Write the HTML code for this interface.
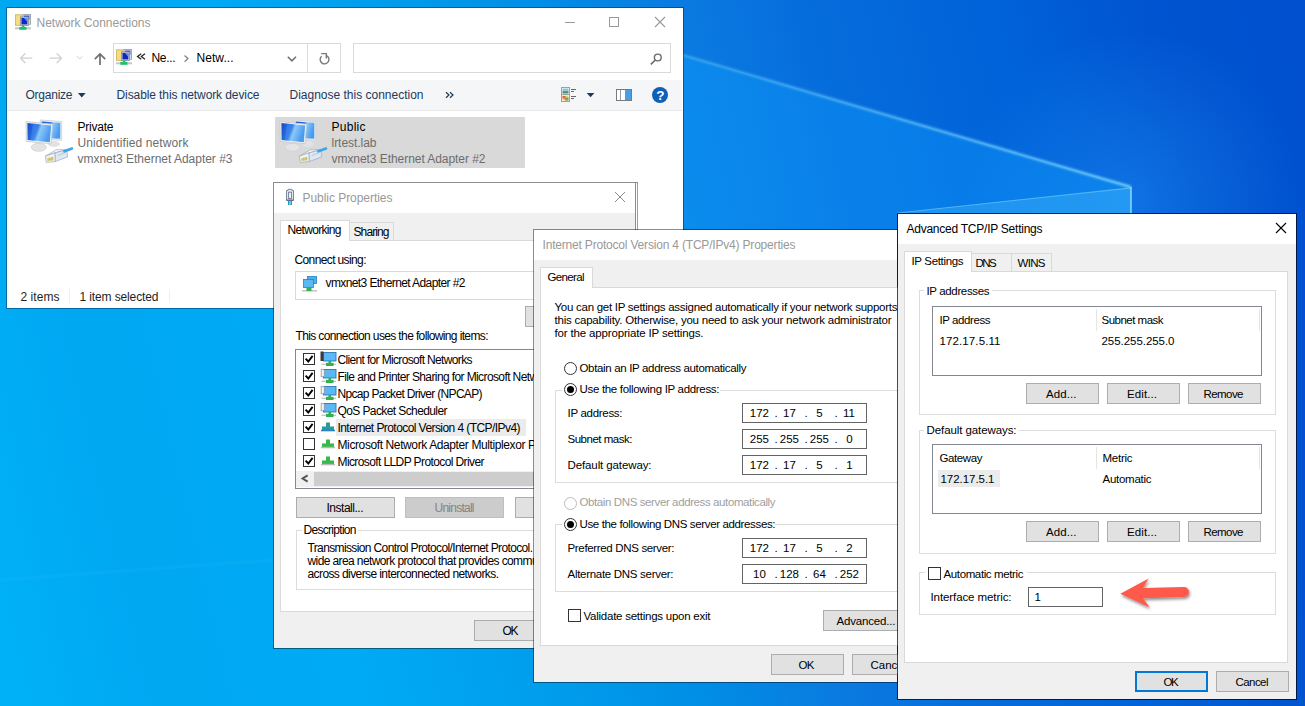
<!DOCTYPE html><html><head><meta charset="utf-8"><style>
html,body{margin:0;padding:0;width:1305px;height:706px;overflow:hidden;}
body{position:relative;font-family:"Liberation Sans", sans-serif;}
body div, body span.t, body svg.a{position:absolute;}
span.t{white-space:nowrap;}
</style></head><body>
<div style="left:0;top:0;width:1305px;height:706px;background:linear-gradient(77deg,#00b2f8 0%,#00a8f2 11%,#00aaf5 25%,#009eec 37%,#008ee6 48%,#0a7ae0 57.6%,#066ddc 66%,#0062d9 79%,#0054d0 89%,#0050cf 100%);"></div>
<svg class="a" style="left:0;top:0" width="1305" height="706" viewBox="0 0 1305 706">
<defs><filter id="gl" x="-5%" y="-50%" width="110%" height="200%"><feGaussianBlur stdDeviation="1.3"/></filter>
<linearGradient id="lg" x1="683" y1="0" x2="1131" y2="0" gradientUnits="userSpaceOnUse"><stop offset="0" stop-color="#7fd8ff" stop-opacity="0.35"/><stop offset="1" stop-color="#8fe8ff" stop-opacity="0.75"/></linearGradient>
<radialGradient id="rg" cx="1131" cy="200" r="170" gradientUnits="userSpaceOnUse"><stop offset="0" stop-color="#2aa0ff" stop-opacity="0.35"/><stop offset="1" stop-color="#2aa0ff" stop-opacity="0"/></radialGradient></defs>
<rect x="900" y="30" width="405" height="200" fill="url(#rg)"/>
<polygon points="683,55 1131,187 1131,213 683,260" fill="#10a0ff" fill-opacity="0.38"/>
<polygon points="897,213 1131,187 1131,213" fill="#50c8ff" fill-opacity="0.32"/>
<polyline points="683,55 1131,187" fill="none" stroke="url(#lg)" stroke-width="2.5" filter="url(#gl)"/>
<polyline points="683,55 1131,187" fill="none" stroke="url(#lg)" stroke-width="1" stroke-opacity="0.25"/>
<line x1="1131" y1="187" x2="1131" y2="214" stroke="#9aeaff" stroke-opacity="0.85" stroke-width="1.5"/>
<line x1="897" y1="213" x2="1131" y2="188" stroke="#8fdcff" stroke-opacity="0.45" stroke-width="1"/>
<line x1="0" y1="580" x2="273" y2="560" stroke="#9fe6ff" stroke-opacity="0.07" stroke-width="2" filter="url(#gl)"/>
</svg>
<div style="left:7px;top:8px;width:676px;height:300px;background:#ffffff;"></div>
<div style="left:6px;top:7px;width:678px;height:1px;background:rgba(0,20,50,0.42);"></div>
<div style="left:6px;top:308px;width:678px;height:1px;background:rgba(0,20,50,0.42);"></div>
<div style="left:6px;top:8px;width:1px;height:300px;background:rgba(0,20,50,0.42);"></div>
<div style="left:683px;top:8px;width:1px;height:300px;background:rgba(0,20,50,0.42);"></div>
<span class="t" style="left:36.50px;top:16.84px;font-size:12px;line-height:12px;color:#999999;letter-spacing:-0.003px;">Network Connections</span>
<div style="left:565px;top:22px;width:10px;height:1px;background:#999"></div>
<div style="left:609px;top:17px;width:10px;height:10px;border:1px solid #999;box-sizing:border-box"></div>
<svg class="a" style="left:654px;top:16px" width="12" height="12"><path d="M1 1L11 11M11 1L1 11" stroke="#999" stroke-width="1.1"/></svg>
<div style="left:113px;top:43px;width:228px;height:30px;background:#fff;border:1px solid #d9d9d9;box-sizing:border-box;"></div>
<div style="left:307px;top:44px;width:1px;height:28px;background:#d9d9d9;"></div>
<div style="left:353px;top:43px;width:318px;height:30px;background:#fff;border:1px solid #d9d9d9;box-sizing:border-box;"></div>
<span class="t" style="left:151.50px;top:51.84px;font-size:12px;line-height:12px;color:#000;letter-spacing:-0.336px;">Ne...</span>
<span class="t" style="left:196.50px;top:51.84px;font-size:12px;line-height:12px;color:#000;letter-spacing:0.052px;">Netw...</span>
<div style="left:7px;top:80px;width:675px;height:30px;background:#f5f6f7;"></div>
<div style="left:7px;top:110px;width:675px;height:1px;background:#e8e8e8;"></div>
<span class="t" style="left:25.50px;top:88.84px;font-size:12px;line-height:12px;color:#1e395b;letter-spacing:-0.243px;">Organize</span>
<span class="t" style="left:116.50px;top:88.84px;font-size:12px;line-height:12px;color:#1e395b;letter-spacing:-0.093px;">Disable this network device</span>
<span class="t" style="left:289.50px;top:88.84px;font-size:12px;line-height:12px;color:#1e395b;letter-spacing:-0.004px;">Diagnose this connection</span>
<div style="left:275px;top:117px;width:250px;height:51px;background:#d9d9d9;"></div>
<span class="t" style="left:77.50px;top:120.84px;font-size:12px;line-height:12px;color:#000;letter-spacing:-0.227px;">Private</span>
<span class="t" style="left:77.50px;top:136.84px;font-size:12px;line-height:12px;color:#6d6d6d;letter-spacing:0.119px;">Unidentified network</span>
<span class="t" style="left:77.50px;top:152.84px;font-size:12px;line-height:12px;color:#6d6d6d;letter-spacing:-0.017px;">vmxnet3 Ethernet Adapter #3</span>
<span class="t" style="left:331.50px;top:120.84px;font-size:12px;line-height:12px;color:#000;letter-spacing:0.263px;">Public</span>
<span class="t" style="left:331.50px;top:136.84px;font-size:12px;line-height:12px;color:#6d6d6d;letter-spacing:-0.040px;">lrtest.lab</span>
<span class="t" style="left:331.50px;top:152.84px;font-size:12px;line-height:12px;color:#6d6d6d;letter-spacing:-0.055px;">vmxnet3 Ethernet Adapter #2</span>
<span class="t" style="left:20.50px;top:290.84px;font-size:12px;line-height:12px;color:#1e1e1e;letter-spacing:0.052px;">2 items</span>
<span class="t" style="left:79.50px;top:290.84px;font-size:12px;line-height:12px;color:#1e1e1e;letter-spacing:-0.123px;">1 item selected</span>
<div style="left:69px;top:289px;width:1px;height:14px;background:#f0f0f0;"></div>
<div style="left:169px;top:289px;width:1px;height:14px;background:#f0f0f0;"></div>
<svg class="a" style="left:15px;top:14px" width="16" height="16" viewBox="0 0 16 16"><g>
<rect x="0.5" y="0.8" width="6" height="10.5" fill="#f2dc84" stroke="#d0b050" stroke-width="0.8"/>
<rect x="7.8" y="0.5" width="7.7" height="9.8" fill="#d4dae2" stroke="#9aa0a8" stroke-width="0.9"/>
<rect x="9" y="1.6" width="5.4" height="4" fill="#3050d8"/>
<rect x="5.4" y="3" width="8" height="8.4" fill="#c8ccd2" stroke="#8a9098" stroke-width="0.8"/>
<rect x="6.5" y="4" width="5.8" height="6.4" fill="#1028c0"/>
<path d="M9 4H12.3V8Z" fill="#6a90f0"/>
<rect x="0" y="13.3" width="16" height="2" fill="#c4c8cc"/>
<rect x="6.8" y="11.4" width="2.6" height="2.2" fill="#20c070"/>
<rect x="4.3" y="13" width="7.2" height="2.8" fill="#20c070"/>
</g></svg>
<svg class="a" style="left:116px;top:49px" width="16" height="16" viewBox="0 0 16 16"><g>
<rect x="0.5" y="0.8" width="6" height="10.5" fill="#f2dc84" stroke="#d0b050" stroke-width="0.8"/>
<rect x="7.8" y="0.5" width="7.7" height="9.8" fill="#d4dae2" stroke="#9aa0a8" stroke-width="0.9"/>
<rect x="9" y="1.6" width="5.4" height="4" fill="#3050d8"/>
<rect x="5.4" y="3" width="8" height="8.4" fill="#c8ccd2" stroke="#8a9098" stroke-width="0.8"/>
<rect x="6.5" y="4" width="5.8" height="6.4" fill="#1028c0"/>
<path d="M9 4H12.3V8Z" fill="#6a90f0"/>
<rect x="0" y="13.3" width="16" height="2" fill="#c4c8cc"/>
<rect x="6.8" y="11.4" width="2.6" height="2.2" fill="#20c070"/>
<rect x="4.3" y="13" width="7.2" height="2.8" fill="#20c070"/>
</g></svg>
<svg class="a" style="left:18px;top:50px" width="100" height="18" viewBox="18 50 100 18">
<path d="M20.5 58.2H32.3M20.5 58.2L25.3 53.4M20.5 58.2L25.3 63" stroke="#cfcfcf" stroke-width="1.3" fill="none"/>
<path d="M61.5 58.2H49.7M61.5 58.2L56.7 53.4M61.5 58.2L56.7 63" stroke="#cfcfcf" stroke-width="1.3" fill="none"/>
<path d="M76.8 56L79.7 58.9L82.6 56" stroke="#cfcfcf" stroke-width="1" fill="none"/>
<path d="M100 65V54M94.8 59.2L100 54L105.2 59.2" stroke="#707070" stroke-width="1.7" fill="none"/>
</svg>
<svg class="a" style="left:134px;top:50px" width="60" height="16" viewBox="134 50 60 16">
<path d="M141.2 53.8L137.5 56.5L141.2 59.2M145 53.8L141.3 56.5L145 59.2" stroke="#222" stroke-width="1.2" fill="none"/>
<path d="M184.6 55.5L187.9 58.6L184.6 61.7" stroke="#808080" stroke-width="1.3" fill="none"/>
</svg>
<svg class="a" style="left:284px;top:50px" width="50" height="18" viewBox="284 50 50 18">
<path d="M287.8 56.8L291.9 60.9L296 56.8" stroke="#707070" stroke-width="1.5" fill="none"/>
<path d="M321.6 56.2A4.4 4.4 0 1 0 326.2 55.4" stroke="#7a7a7a" stroke-width="1.4" fill="none"/>
<path d="M321.2 53.6H326.3V58.5" stroke="#7a7a7a" stroke-width="1.4" fill="none"/>
</svg>
<svg class="a" style="left:646px;top:50px" width="20" height="18" viewBox="646 50 20 18">
<circle cx="657.8" cy="57.5" r="3.4" stroke="#6a6a6a" stroke-width="1.4" fill="none"/>
<path d="M655.3 60L650.8 64.3" stroke="#6a6a6a" stroke-width="1.6"/>
</svg>
<svg class="a" style="left:70px;top:85px" width="600" height="20" viewBox="70 85 600 20">
<path d="M78 93H85.6L81.8 97.6Z" fill="#1e395b"/>
<path d="M446 92.2L449 95L446 97.8M450 92.2L453 95L450 97.8" stroke="#1e395b" stroke-width="1.2" fill="none"/>
<rect x="561.5" y="87.5" width="8" height="7" fill="#fff" stroke="#a0a0a0"/>
<rect x="561.5" y="94.5" width="8" height="7" fill="#fff" stroke="#a0a0a0"/>
<rect x="562.5" y="88.5" width="6" height="3" fill="#8cc4ec"/><rect x="562.5" y="91.2" width="6" height="2.3" fill="#4a9058"/>
<rect x="562.5" y="95.5" width="6" height="5" fill="#f0c890"/><rect x="562.5" y="96" width="3" height="2.5" fill="#e06a3a"/><rect x="565" y="97.5" width="3.5" height="3" fill="#6ab050"/>
<path d="M571 89.5H576M571 91.5H574M571 96.5H576M571 98.5H574" stroke="#666" stroke-width="1"/>
<path d="M586.7 93H594.4L590.55 97.3Z" fill="#1e395b"/>
<rect x="616.5" y="89.5" width="15" height="11" fill="#fff" stroke="#7a7a7a"/>
<rect x="625" y="90" width="6" height="10" fill="#4a9ee6"/>
<path d="M620.5 90V100" stroke="#9a9a9a" stroke-width="1"/>
<circle cx="660" cy="95" r="8" fill="#0d5fb8"/>
<text x="660.3" y="100.3" font-family="Liberation Sans" font-weight="bold" font-size="13.5" fill="#fff" text-anchor="middle">?</text>
</svg>
<svg class="a" style="left:24px;top:117px" width="50" height="50" viewBox="0 0 50 50"><g>
<defs><linearGradient id="scr" x1="0" y1="0" x2="1" y2="0.3"><stop offset="0" stop-color="#1848c8"/><stop offset="0.45" stop-color="#2a78e8"/><stop offset="0.6" stop-color="#8cc8f8"/><stop offset="1" stop-color="#4a9af0"/></linearGradient></defs>
<path d="M16.2 3L37.7 4.5L37.7 23.2L17 22.5Z" fill="#eef0f2" stroke="#cfd3d8" stroke-width="0.9"/>
<path d="M17.6 4.6L36.3 5.8L36.3 21.8L18.2 21.1Z" fill="url(#scr)"/>
<ellipse cx="30" cy="27" rx="6" ry="3" fill="#e2e2e2"/>
<ellipse cx="14.7" cy="30.3" rx="7.5" ry="4" fill="#e4e4e4" stroke="#cfcfcf" stroke-width="0.7"/>
<path d="M2 4.5L28.5 7.3L27 26.8L2.3 24.4Z" fill="#f2f3f4" stroke="#c8ccd0" stroke-width="0.9"/>
<path d="M3.4 6L27.1 8.5L25.8 25.3L3.6 23Z" fill="url(#scr)"/>
<path d="M9 6.6L14 7.1L11.5 23.6L6.6 23.1Z" fill="#5a9af0" opacity="0.35"/>
<path d="M21.4 39.1L32.5 32.7L42.8 32.7L30.9 35.9Z" fill="#f4f8fc" stroke="#9aaabb" stroke-width="0.7"/>
<path d="M30.9 35.9L42.8 32.7L43.6 39.9L31.3 44.6Z" fill="#dde8f2" stroke="#9aaabb" stroke-width="0.7"/>
<path d="M21.4 39.1L30.9 35.9L31.3 44.6L22.2 45.4Z" fill="#eef2f6" stroke="#9aaabb" stroke-width="0.7"/>
<path d="M23 41.5L29.5 39.5L29.7 43.3L23.3 44Z" fill="#e8dc90"/>
<path d="M24.2 41.2V43.8M25.6 40.8V43.6M27 40.4V43.5M28.4 40V43.4" stroke="#a89a30" stroke-width="0.5"/>
<path d="M34 38.5L41.5 35.5" stroke="#b9c8d6" stroke-width="1"/>
<path d="M40.4 34.3L48 31.5" stroke="#3aa4ec" stroke-width="2.6" stroke-linecap="round"/>
</g></svg>
<svg class="a" style="left:278px;top:117px" width="50" height="50" viewBox="0 0 50 50"><g>
<defs><linearGradient id="scr" x1="0" y1="0" x2="1" y2="0.3"><stop offset="0" stop-color="#1848c8"/><stop offset="0.45" stop-color="#2a78e8"/><stop offset="0.6" stop-color="#8cc8f8"/><stop offset="1" stop-color="#4a9af0"/></linearGradient></defs>
<path d="M16.2 3L37.7 4.5L37.7 23.2L17 22.5Z" fill="#eef0f2" stroke="#cfd3d8" stroke-width="0.9"/>
<path d="M17.6 4.6L36.3 5.8L36.3 21.8L18.2 21.1Z" fill="url(#scr)"/>
<ellipse cx="30" cy="27" rx="6" ry="3" fill="#e2e2e2"/>
<ellipse cx="14.7" cy="30.3" rx="7.5" ry="4" fill="#e4e4e4" stroke="#cfcfcf" stroke-width="0.7"/>
<path d="M2 4.5L28.5 7.3L27 26.8L2.3 24.4Z" fill="#f2f3f4" stroke="#c8ccd0" stroke-width="0.9"/>
<path d="M3.4 6L27.1 8.5L25.8 25.3L3.6 23Z" fill="url(#scr)"/>
<path d="M9 6.6L14 7.1L11.5 23.6L6.6 23.1Z" fill="#5a9af0" opacity="0.35"/>
<path d="M21.4 39.1L32.5 32.7L42.8 32.7L30.9 35.9Z" fill="#f4f8fc" stroke="#9aaabb" stroke-width="0.7"/>
<path d="M30.9 35.9L42.8 32.7L43.6 39.9L31.3 44.6Z" fill="#dde8f2" stroke="#9aaabb" stroke-width="0.7"/>
<path d="M21.4 39.1L30.9 35.9L31.3 44.6L22.2 45.4Z" fill="#eef2f6" stroke="#9aaabb" stroke-width="0.7"/>
<path d="M23 41.5L29.5 39.5L29.7 43.3L23.3 44Z" fill="#e8dc90"/>
<path d="M24.2 41.2V43.8M25.6 40.8V43.6M27 40.4V43.5M28.4 40V43.4" stroke="#a89a30" stroke-width="0.5"/>
<path d="M34 38.5L41.5 35.5" stroke="#b9c8d6" stroke-width="1"/>
<path d="M40.4 34.3L48 31.5" stroke="#3aa4ec" stroke-width="2.6" stroke-linecap="round"/>
</g></svg>
<div style="left:274px;top:183px;width:361px;height:465px;background:#f0f0f0;"></div>
<div style="left:274px;top:183px;width:361px;height:30px;background:#ffffff;"></div>
<div style="left:273px;top:182px;width:365px;height:1px;background:rgba(0,0,0,0.45);"></div>
<div style="left:273px;top:648px;width:363px;height:1px;background:rgba(0,0,0,0.45);"></div>
<div style="left:273px;top:183px;width:1px;height:465px;background:rgba(0,0,0,0.45);"></div>
<div style="left:635px;top:183px;width:1px;height:465px;background:rgba(0,0,0,0.45);"></div>
<div style="left:636px;top:183px;width:1px;height:465px;background:rgba(255,255,255,0.7);"></div>
<div style="left:637px;top:183px;width:1px;height:466px;background:rgba(0,0,0,0.38);"></div>
<span class="t" style="left:302.50px;top:191.84px;font-size:12px;line-height:12px;color:#999999;letter-spacing:-0.045px;">Public Properties</span>
<svg class="a" style="left:614px;top:191px" width="12" height="12"><path d="M1 1L11 11M11 1L1 11" stroke="#8a8a8a" stroke-width="1"/></svg>
<div style="left:280px;top:240px;width:355px;height:372px;background:#ffffff;border:1px solid #d9d9d9;box-sizing:border-box;"></div>
<div style="left:349px;top:222px;width:45px;height:19px;background:#f0f0f0;border:1px solid #d9d9d9;box-sizing:border-box;"></div>
<div style="left:280px;top:220px;width:70px;height:21px;background:#ffffff;border:1px solid #d9d9d9;box-sizing:border-box;border-bottom:none;"></div>
<span class="t" style="left:287.50px;top:223.84px;font-size:12px;line-height:12px;color:#000;letter-spacing:-0.670px;">Networking</span>
<span class="t" style="left:353.50px;top:225.84px;font-size:12px;line-height:12px;color:#000;letter-spacing:-0.896px;">Sharing</span>
<span class="t" style="left:294.50px;top:253.84px;font-size:12px;line-height:12px;color:#000;letter-spacing:-0.620px;">Connect using:</span>
<div style="left:295px;top:271px;width:260px;height:29px;background:#fff;border:1px solid #d9d9d9;box-sizing:border-box;"></div>
<span class="t" style="left:325.50px;top:276.84px;font-size:12px;line-height:12px;color:#000;letter-spacing:-0.594px;">vmxnet3 Ethernet Adapter #2</span>
<div style="left:525px;top:306px;width:30px;height:21px;background:#e1e1e1;border:1px solid #adadad;box-sizing:border-box;"></div>
<span class="t" style="left:295.50px;top:329.84px;font-size:12px;line-height:12px;color:#000;letter-spacing:-0.628px;">This connection uses the following items:</span>
<div style="left:295px;top:349px;width:260px;height:140px;background:#fff;border:1px solid #828790;box-sizing:border-box;"></div>
<div style="left:336px;top:419px;width:190px;height:17px;background:#ebebeb;"></div>
<span class="t" style="left:337.50px;top:353.84px;font-size:12px;line-height:12px;color:#000;letter-spacing:-0.656px;">Client for Microsoft Networks</span>
<span class="t" style="left:337.50px;top:370.84px;font-size:12px;line-height:12px;color:#000;letter-spacing:-0.606px;">File and Printer Sharing for Microsoft Networks</span>
<span class="t" style="left:337.50px;top:387.84px;font-size:12px;line-height:12px;color:#000;letter-spacing:-0.681px;">Npcap Packet Driver (NPCAP)</span>
<span class="t" style="left:337.50px;top:404.84px;font-size:12px;line-height:12px;color:#000;letter-spacing:-0.600px;">QoS Packet Scheduler</span>
<span class="t" style="left:337.50px;top:421.84px;font-size:12px;line-height:12px;color:#000;letter-spacing:-0.570px;">Internet Protocol Version 4 (TCP/IPv4)</span>
<span class="t" style="left:337.50px;top:438.84px;font-size:12px;line-height:12px;color:#000;letter-spacing:-0.391px;">Microsoft Network Adapter Multiplexor Protocol</span>
<span class="t" style="left:337.50px;top:455.84px;font-size:12px;line-height:12px;color:#000;letter-spacing:-0.603px;">Microsoft LLDP Protocol Driver</span>
<svg class="a" style="left:284px;top:187px" width="14" height="20" viewBox="284 187 14 20">
<path d="M286.5 190.5H288V189.3H292V190.5H293.5V200.5H286.5Z" fill="#dfe7f0" stroke="#7c8aa0" stroke-width="1"/>
<rect x="288.6" y="192.2" width="2.8" height="6.3" fill="#f4f6fa" stroke="#6a7890" stroke-width="0.9"/>
<rect x="286.5" y="199.5" width="7" height="1.2" fill="#56647c"/>
<rect x="288" y="201" width="1.6" height="4" fill="#1c9ad4"/><rect x="290.4" y="201" width="1.6" height="4" fill="#1c9ad4"/>
</svg>
<svg class="a" style="left:301px;top:275px" width="18" height="18" viewBox="301 274 18 18">
<rect x="307.5" y="275.5" width="9" height="7" fill="#4db0ee" stroke="#2a80c0" stroke-width="0.8"/>
<rect x="303.5" y="278.5" width="10" height="8" fill="#5ab8f2" stroke="#2a80c0" stroke-width="0.8"/>
<rect x="302" y="289" width="15" height="1.6" fill="#c8c8c8"/>
<rect x="306.5" y="286.5" width="5" height="3.5" fill="#30b050"/>
</svg>
<svg class="a" style="left:300px;top:350px" width="40" height="122" viewBox="300 350 40 122"><rect x="303.5" y="353.5" width="11" height="11" fill="#fff" stroke="#333" stroke-width="1"/><path d="M305.6 358.7L308.3 361.5L312.6 355.9" stroke="#000" stroke-width="1.9" fill="none"/><rect x="323.5" y="352.5" width="12.5" height="8.5" fill="#5ab8f4" stroke="#2a78b8" stroke-width="0.9"/><rect x="328.5" y="361.0" width="2.5" height="2.5" fill="#30b050"/><rect x="321.5" y="363.7" width="14.5" height="1.3" fill="#c4c4c4"/><rect x="326" y="362.8" width="7.5" height="3.2" fill="#30b050"/><rect x="320.5" y="351.5" width="3" height="9.5" fill="#3a3a3a"/><rect x="303.5" y="370.5" width="11" height="11" fill="#fff" stroke="#333" stroke-width="1"/><path d="M305.6 375.7L308.3 378.5L312.6 372.9" stroke="#000" stroke-width="1.9" fill="none"/><rect x="323.5" y="369.5" width="12.5" height="8.5" fill="#5ab8f4" stroke="#2a78b8" stroke-width="0.9"/><rect x="328.5" y="378.0" width="2.5" height="2.5" fill="#30b050"/><rect x="321.5" y="380.7" width="14.5" height="1.3" fill="#c4c4c4"/><rect x="326" y="379.8" width="7.5" height="3.2" fill="#30b050"/><path d="M321.2 369.0l1.6 0.8 0.8 -0.8 0.8 1.5v5.5l-1.6 1 -1 -0.8 -0.6 0.8z" fill="#f2f2f2" stroke="#8a8a8a" stroke-width="0.7"/><rect x="303.5" y="387.5" width="11" height="11" fill="#fff" stroke="#333" stroke-width="1"/><path d="M305.6 392.7L308.3 395.5L312.6 389.9" stroke="#000" stroke-width="1.9" fill="none"/><rect x="323.5" y="386.5" width="12.5" height="8.5" fill="#5ab8f4" stroke="#2a78b8" stroke-width="0.9"/><rect x="328.5" y="395.0" width="2.5" height="2.5" fill="#30b050"/><rect x="321.5" y="397.7" width="14.5" height="1.3" fill="#c4c4c4"/><rect x="326" y="396.8" width="7.5" height="3.2" fill="#30b050"/><path d="M321.2 386.0l1.6 0.8 0.8 -0.8 0.8 1.5v5.5l-1.6 1 -1 -0.8 -0.6 0.8z" fill="#f2f2f2" stroke="#8a8a8a" stroke-width="0.7"/><rect x="303.5" y="404.5" width="11" height="11" fill="#fff" stroke="#333" stroke-width="1"/><path d="M305.6 409.7L308.3 412.5L312.6 406.9" stroke="#000" stroke-width="1.9" fill="none"/><rect x="323.5" y="403.5" width="12.5" height="8.5" fill="#5ab8f4" stroke="#2a78b8" stroke-width="0.9"/><rect x="328.5" y="412.0" width="2.5" height="2.5" fill="#30b050"/><rect x="321.5" y="414.7" width="14.5" height="1.3" fill="#c4c4c4"/><rect x="326" y="413.8" width="7.5" height="3.2" fill="#30b050"/><path d="M321.2 403.0l1.6 0.8 0.8 -0.8 0.8 1.5v5.5l-1.6 1 -1 -0.8 -0.6 0.8z" fill="#f2f2f2" stroke="#8a8a8a" stroke-width="0.7"/><rect x="303.5" y="421.5" width="11" height="11" fill="#fff" stroke="#333" stroke-width="1"/><path d="M305.6 426.7L308.3 429.5L312.6 423.9" stroke="#000" stroke-width="1.9" fill="none"/><rect x="326" y="422.5" width="4" height="4.5" fill="#2a9a9a"/><rect x="322" y="426.5" width="12" height="3.5" fill="#2a9a9a"/><rect x="321" y="429.8" width="14" height="1.5" fill="#2a80c8"/><rect x="303.5" y="438.5" width="11" height="11" fill="#fff" stroke="#333" stroke-width="1"/><rect x="326" y="439.5" width="4" height="4.5" fill="#38b84a"/><rect x="322" y="443.5" width="12" height="3.5" fill="#38b84a"/><rect x="321" y="446.8" width="14" height="1.5" fill="#b8b8b8"/><rect x="303.5" y="455.5" width="11" height="11" fill="#fff" stroke="#333" stroke-width="1"/><path d="M305.6 460.7L308.3 463.5L312.6 457.9" stroke="#000" stroke-width="1.9" fill="none"/><rect x="326" y="456.5" width="4" height="4.5" fill="#38b84a"/><rect x="322" y="460.5" width="12" height="3.5" fill="#38b84a"/><rect x="321" y="463.8" width="14" height="1.5" fill="#b8b8b8"/></svg>
<div style="left:296px;top:471px;width:259px;height:16px;background:#f0f0f0;"></div>
<div style="left:314px;top:472px;width:241px;height:14px;background:#cdcdcd;"></div>
<svg class="a" style="left:298px;top:472px" width="14" height="14" viewBox="298 472 14 14"><path d="M307.6 475.3L302.6 478.5L307.6 481.7" stroke="#555" stroke-width="2" fill="none"/></svg>
<div style="left:296px;top:497px;width:99px;height:21px;background:#e1e1e1;border:1px solid #adadad;box-sizing:border-box;"></div>
<span class="t" style="left:326.50px;top:501.84px;font-size:12px;line-height:12px;color:#000;letter-spacing:-0.484px;">Install...</span>
<div style="left:405px;top:497px;width:99px;height:21px;background:#cccccc;border:1px solid #bfbfbf;box-sizing:border-box;"></div>
<span class="t" style="left:434.50px;top:501.84px;font-size:12px;line-height:12px;color:#838383;letter-spacing:-0.754px;">Uninstall</span>
<div style="left:515px;top:497px;width:40px;height:21px;background:#e1e1e1;border:1px solid #adadad;box-sizing:border-box;"></div>
<div style="left:296px;top:530px;width:259px;height:60px;background:transparent;border:1px solid #dcdcdc;box-sizing:border-box;"></div>
<div style="left:302px;top:524px;width:56px;height:12px;background:#ffffff;"></div>
<span class="t" style="left:303.50px;top:523.84px;font-size:12px;line-height:12px;color:#000;letter-spacing:-0.703px;">Description</span>
<span class="t" style="left:307.50px;top:541.84px;font-size:12px;line-height:12px;color:#000;letter-spacing:-0.628px;">Transmission Control Protocol/Internet Protocol. The default</span>
<span class="t" style="left:307.50px;top:554.84px;font-size:12px;line-height:12px;color:#000;letter-spacing:-0.601px;">wide area network protocol that provides communication</span>
<span class="t" style="left:307.50px;top:567.84px;font-size:12px;line-height:12px;color:#000;letter-spacing:-0.595px;">across diverse interconnected networks.</span>
<div style="left:474px;top:620px;width:75px;height:21px;background:#e1e1e1;border:1px solid #adadad;box-sizing:border-box;"></div>
<span class="t" style="left:502.50px;top:624.84px;font-size:12px;line-height:12px;color:#000;letter-spacing:-1.344px;">OK</span>
<div style="left:534px;top:230px;width:363px;height:452px;background:#f0f0f0;"></div>
<div style="left:534px;top:230px;width:363px;height:30px;background:#ffffff;"></div>
<div style="left:533px;top:229px;width:364px;height:1px;background:rgba(0,0,0,0.45);"></div>
<div style="left:533px;top:682px;width:364px;height:1px;background:rgba(0,0,0,0.45);"></div>
<div style="left:533px;top:230px;width:1px;height:452px;background:rgba(0,0,0,0.45);"></div>
<span class="t" style="left:542.50px;top:238.84px;font-size:12px;line-height:12px;color:#999999;letter-spacing:-0.190px;">Internet Protocol Version 4 (TCP/IPv4) Properties</span>
<div style="left:540px;top:287px;width:370px;height:359px;background:#ffffff;border:1px solid #d9d9d9;box-sizing:border-box;"></div>
<div style="left:540px;top:267px;width:53px;height:21px;background:#ffffff;border:1px solid #d9d9d9;box-sizing:border-box;border-bottom:none;"></div>
<span class="t" style="left:547.50px;top:272.27px;font-size:11.5px;line-height:11.5px;color:#000;letter-spacing:-0.654px;">General</span>
<span class="t" style="left:554.50px;top:302.27px;font-size:11.5px;line-height:11.5px;color:#000;letter-spacing:-0.269px;">You can get IP settings assigned automatically if your network supports</span>
<span class="t" style="left:554.50px;top:315.27px;font-size:11.5px;line-height:11.5px;color:#000;letter-spacing:-0.226px;">this capability. Otherwise, you need to ask your network administrator</span>
<span class="t" style="left:554.50px;top:328.27px;font-size:11.5px;line-height:11.5px;color:#000;letter-spacing:-0.157px;">for the appropriate IP settings.</span>
<svg class="a" style="left:563px;top:361px" width="15" height="15"><circle cx="7.5" cy="7.5" r="6" fill="#fff" stroke="#333" stroke-width="1"/></svg>
<span class="t" style="left:579.50px;top:363.27px;font-size:11.5px;line-height:11.5px;color:#000;letter-spacing:-0.338px;">Obtain an IP address automatically</span>
<div style="left:555px;top:390px;width:350px;height:93px;background:transparent;border:1px solid #dcdcdc;box-sizing:border-box;"></div>
<div style="left:555px;top:524px;width:350px;height:68px;background:transparent;border:1px solid #dcdcdc;box-sizing:border-box;"></div>
<div style="left:562px;top:383px;width:158px;height:13px;background:#ffffff;"></div>
<svg class="a" style="left:563px;top:382px" width="15" height="15"><circle cx="7.5" cy="7.5" r="6" fill="#fff" stroke="#333" stroke-width="1"/><circle cx="7.5" cy="7.5" r="3.5" fill="#000"/></svg>
<span class="t" style="left:579.50px;top:384.27px;font-size:11.5px;line-height:11.5px;color:#000;letter-spacing:-0.312px;">Use the following IP address:</span>
<span class="t" style="left:567.50px;top:408.27px;font-size:11.5px;line-height:11.5px;color:#000;letter-spacing:-0.297px;">IP address:</span>
<span class="t" style="left:567.50px;top:434.27px;font-size:11.5px;line-height:11.5px;color:#000;letter-spacing:-0.484px;">Subnet mask:</span>
<span class="t" style="left:567.50px;top:460.27px;font-size:11.5px;line-height:11.5px;color:#000;letter-spacing:-0.111px;">Default gateway:</span>
<div style="left:742px;top:403px;width:125px;height:20px;background:#fff;border:1px solid #646464;box-sizing:border-box;"></div>
<span class="t" style="left:774.50px;top:408.27px;font-size:11.5px;line-height:11.5px;color:#000;">.</span>
<span class="t" style="left:804.50px;top:408.27px;font-size:11.5px;line-height:11.5px;color:#000;">.</span>
<span class="t" style="left:834.50px;top:408.27px;font-size:11.5px;line-height:11.5px;color:#000;">.</span>
<span class="t" style="left:749.75px;top:408.27px;font-size:11.5px;line-height:11.5px;color:#000;">172</span>
<span class="t" style="left:783.00px;top:408.27px;font-size:11.5px;line-height:11.5px;color:#000;">17</span>
<span class="t" style="left:816.25px;top:408.27px;font-size:11.5px;line-height:11.5px;color:#000;">5</span>
<span class="t" style="left:843.00px;top:408.27px;font-size:11.5px;line-height:11.5px;color:#000;">11</span>
<div style="left:742px;top:429px;width:125px;height:20px;background:#fff;border:1px solid #646464;box-sizing:border-box;"></div>
<span class="t" style="left:774.50px;top:434.27px;font-size:11.5px;line-height:11.5px;color:#000;">.</span>
<span class="t" style="left:804.50px;top:434.27px;font-size:11.5px;line-height:11.5px;color:#000;">.</span>
<span class="t" style="left:834.50px;top:434.27px;font-size:11.5px;line-height:11.5px;color:#000;">.</span>
<span class="t" style="left:749.75px;top:434.27px;font-size:11.5px;line-height:11.5px;color:#000;">255</span>
<span class="t" style="left:779.75px;top:434.27px;font-size:11.5px;line-height:11.5px;color:#000;">255</span>
<span class="t" style="left:809.75px;top:434.27px;font-size:11.5px;line-height:11.5px;color:#000;">255</span>
<span class="t" style="left:846.25px;top:434.27px;font-size:11.5px;line-height:11.5px;color:#000;">0</span>
<div style="left:742px;top:455px;width:125px;height:20px;background:#fff;border:1px solid #646464;box-sizing:border-box;"></div>
<span class="t" style="left:774.50px;top:460.27px;font-size:11.5px;line-height:11.5px;color:#000;">.</span>
<span class="t" style="left:804.50px;top:460.27px;font-size:11.5px;line-height:11.5px;color:#000;">.</span>
<span class="t" style="left:834.50px;top:460.27px;font-size:11.5px;line-height:11.5px;color:#000;">.</span>
<span class="t" style="left:749.75px;top:460.27px;font-size:11.5px;line-height:11.5px;color:#000;">172</span>
<span class="t" style="left:783.00px;top:460.27px;font-size:11.5px;line-height:11.5px;color:#000;">17</span>
<span class="t" style="left:816.25px;top:460.27px;font-size:11.5px;line-height:11.5px;color:#000;">5</span>
<span class="t" style="left:846.25px;top:460.27px;font-size:11.5px;line-height:11.5px;color:#000;">1</span>
<svg class="a" style="left:563px;top:496px" width="15" height="15"><circle cx="7.5" cy="7.5" r="6" fill="#fff" stroke="#bcbcbc" stroke-width="1"/></svg>
<span class="t" style="left:579.50px;top:497.27px;font-size:11.5px;line-height:11.5px;color:#a0a0a0;letter-spacing:-0.393px;">Obtain DNS server address automatically</span>
<div style="left:562px;top:517px;width:213px;height:13px;background:#ffffff;"></div>
<svg class="a" style="left:563px;top:517px" width="15" height="15"><circle cx="7.5" cy="7.5" r="6" fill="#fff" stroke="#333" stroke-width="1"/><circle cx="7.5" cy="7.5" r="3.5" fill="#000"/></svg>
<span class="t" style="left:579.50px;top:519.27px;font-size:11.5px;line-height:11.5px;color:#000;letter-spacing:-0.359px;">Use the following DNS server addresses:</span>
<span class="t" style="left:567.50px;top:543.27px;font-size:11.5px;line-height:11.5px;color:#000;letter-spacing:-0.338px;">Preferred DNS server:</span>
<span class="t" style="left:567.50px;top:569.27px;font-size:11.5px;line-height:11.5px;color:#000;letter-spacing:-0.293px;">Alternate DNS server:</span>
<div style="left:742px;top:538px;width:125px;height:20px;background:#fff;border:1px solid #646464;box-sizing:border-box;"></div>
<span class="t" style="left:774.50px;top:543.27px;font-size:11.5px;line-height:11.5px;color:#000;">.</span>
<span class="t" style="left:804.50px;top:543.27px;font-size:11.5px;line-height:11.5px;color:#000;">.</span>
<span class="t" style="left:834.50px;top:543.27px;font-size:11.5px;line-height:11.5px;color:#000;">.</span>
<span class="t" style="left:749.75px;top:543.27px;font-size:11.5px;line-height:11.5px;color:#000;">172</span>
<span class="t" style="left:783.00px;top:543.27px;font-size:11.5px;line-height:11.5px;color:#000;">17</span>
<span class="t" style="left:816.25px;top:543.27px;font-size:11.5px;line-height:11.5px;color:#000;">5</span>
<span class="t" style="left:846.25px;top:543.27px;font-size:11.5px;line-height:11.5px;color:#000;">2</span>
<div style="left:742px;top:564px;width:125px;height:20px;background:#fff;border:1px solid #646464;box-sizing:border-box;"></div>
<span class="t" style="left:774.50px;top:569.27px;font-size:11.5px;line-height:11.5px;color:#000;">.</span>
<span class="t" style="left:804.50px;top:569.27px;font-size:11.5px;line-height:11.5px;color:#000;">.</span>
<span class="t" style="left:834.50px;top:569.27px;font-size:11.5px;line-height:11.5px;color:#000;">.</span>
<span class="t" style="left:753.00px;top:569.27px;font-size:11.5px;line-height:11.5px;color:#000;">10</span>
<span class="t" style="left:779.75px;top:569.27px;font-size:11.5px;line-height:11.5px;color:#000;">128</span>
<span class="t" style="left:813.00px;top:569.27px;font-size:11.5px;line-height:11.5px;color:#000;">64</span>
<span class="t" style="left:839.75px;top:569.27px;font-size:11.5px;line-height:11.5px;color:#000;">252</span>
<div style="left:568px;top:609px;width:13px;height:13px;background:#fff;border:1px solid #333;box-sizing:border-box;"></div>
<span class="t" style="left:583.50px;top:611.27px;font-size:11.5px;line-height:11.5px;color:#000;letter-spacing:-0.246px;">Validate settings upon exit</span>
<div style="left:823px;top:610px;width:90px;height:21px;background:#e1e1e1;border:1px solid #adadad;box-sizing:border-box;"></div>
<span class="t" style="left:836.50px;top:616.27px;font-size:11.5px;line-height:11.5px;color:#000;letter-spacing:-0.173px;">Advanced...</span>
<div style="left:771px;top:654px;width:73px;height:21px;background:#e1e1e1;border:1px solid #adadad;box-sizing:border-box;"></div>
<span class="t" style="left:798.50px;top:660.27px;font-size:11.5px;line-height:11.5px;color:#000;letter-spacing:-0.625px;">OK</span>
<div style="left:852px;top:654px;width:73px;height:21px;background:#e1e1e1;border:1px solid #adadad;box-sizing:border-box;"></div>
<span class="t" style="left:870.50px;top:660.27px;font-size:11.5px;line-height:11.5px;color:#000;">Cancel</span>
<div style="left:898px;top:214px;width:398px;height:485px;background:#f0f0f0;"></div>
<div style="left:898px;top:214px;width:398px;height:30px;background:#ffffff;"></div>
<div style="left:897px;top:213px;width:400px;height:1px;background:rgba(0,0,20,0.72);"></div>
<div style="left:897px;top:699px;width:400px;height:1px;background:rgba(0,0,20,0.72);"></div>
<div style="left:897px;top:214px;width:1px;height:485px;background:rgba(0,0,20,0.72);"></div>
<div style="left:1296px;top:214px;width:1px;height:485px;background:rgba(0,0,20,0.72);"></div>
<span class="t" style="left:906.50px;top:222.84px;font-size:12px;line-height:12px;color:#000;letter-spacing:-0.245px;">Advanced TCP/IP Settings</span>
<svg class="a" style="left:1275px;top:222px" width="12" height="12"><path d="M1 1L11 11M11 1L1 11" stroke="#000" stroke-width="1.1"/></svg>
<div style="left:904px;top:271px;width:384px;height:392px;background:#ffffff;border:1px solid #d9d9d9;box-sizing:border-box;"></div>
<div style="left:971px;top:253px;width:41px;height:19px;background:#f0f0f0;border:1px solid #d9d9d9;box-sizing:border-box;"></div>
<div style="left:1011px;top:253px;width:41px;height:19px;background:#f0f0f0;border:1px solid #d9d9d9;box-sizing:border-box;"></div>
<div style="left:904px;top:251px;width:68px;height:21px;background:#ffffff;border:1px solid #d9d9d9;box-sizing:border-box;border-bottom:none;"></div>
<span class="t" style="left:911.50px;top:256.27px;font-size:11.5px;line-height:11.5px;color:#000;letter-spacing:-0.341px;">IP Settings</span>
<span class="t" style="left:975.50px;top:258.27px;font-size:11.5px;line-height:11.5px;color:#000;letter-spacing:-1.500px;">DNS</span>
<span class="t" style="left:1017.50px;top:258.27px;font-size:11.5px;line-height:11.5px;color:#000;letter-spacing:-0.677px;">WINS</span>
<div style="left:919px;top:290px;width:357px;height:125px;background:transparent;border:1px solid #dcdcdc;box-sizing:border-box;"></div>
<div style="left:924px;top:284px;width:68px;height:13px;background:#fff;"></div>
<span class="t" style="left:926.50px;top:286.27px;font-size:11.5px;line-height:11.5px;color:#000;letter-spacing:-0.357px;">IP addresses</span>
<div style="left:932px;top:306px;width:330px;height:70px;background:#fff;border:1px solid #828790;box-sizing:border-box;"></div>
<div style="left:1096px;top:309px;width:1px;height:22px;background:#e5e5e5;"></div>
<div style="left:1259px;top:309px;width:1px;height:22px;background:#e5e5e5;"></div>
<span class="t" style="left:939.50px;top:315.27px;font-size:11.5px;line-height:11.5px;color:#000;letter-spacing:-0.418px;">IP address</span>
<span class="t" style="left:1101.50px;top:315.27px;font-size:11.5px;line-height:11.5px;color:#000;letter-spacing:-0.512px;">Subnet mask</span>
<span class="t" style="left:939.50px;top:336.27px;font-size:11.5px;line-height:11.5px;color:#000;letter-spacing:0.109px;">172.17.5.11</span>
<span class="t" style="left:1101.50px;top:336.27px;font-size:11.5px;line-height:11.5px;color:#000;letter-spacing:-0.046px;">255.255.255.0</span>
<div style="left:1026px;top:383px;width:73px;height:21px;background:#e1e1e1;border:1px solid #adadad;box-sizing:border-box;"></div>
<div style="left:1107px;top:383px;width:73px;height:21px;background:#e1e1e1;border:1px solid #adadad;box-sizing:border-box;"></div>
<div style="left:1188px;top:383px;width:73px;height:21px;background:#e1e1e1;border:1px solid #adadad;box-sizing:border-box;"></div>
<span class="t" style="left:1046.00px;top:389.27px;font-size:11.5px;line-height:11.5px;color:#000;letter-spacing:0.087px;">Add...</span>
<span class="t" style="left:1127.00px;top:389.27px;font-size:11.5px;line-height:11.5px;color:#000;letter-spacing:0.099px;">Edit...</span>
<span class="t" style="left:1203.50px;top:389.27px;font-size:11.5px;line-height:11.5px;color:#000;letter-spacing:-0.566px;">Remove</span>
<div style="left:919px;top:430px;width:357px;height:124px;background:transparent;border:1px solid #dcdcdc;box-sizing:border-box;"></div>
<div style="left:924px;top:424px;width:95px;height:13px;background:#fff;"></div>
<span class="t" style="left:926.50px;top:425.27px;font-size:11.5px;line-height:11.5px;color:#000;letter-spacing:-0.089px;">Default gateways:</span>
<div style="left:932px;top:444px;width:330px;height:70px;background:#fff;border:1px solid #828790;box-sizing:border-box;"></div>
<div style="left:1096px;top:447px;width:1px;height:22px;background:#e5e5e5;"></div>
<div style="left:1259px;top:447px;width:1px;height:22px;background:#e5e5e5;"></div>
<span class="t" style="left:939.50px;top:453.27px;font-size:11.5px;line-height:11.5px;color:#000;letter-spacing:-0.398px;">Gateway</span>
<span class="t" style="left:1102.50px;top:453.27px;font-size:11.5px;line-height:11.5px;color:#000;letter-spacing:-0.263px;">Metric</span>
<div style="left:938px;top:470px;width:62px;height:17px;background:#ebebeb;"></div>
<span class="t" style="left:940.50px;top:474.27px;font-size:11.5px;line-height:11.5px;color:#000;letter-spacing:-0.040px;">172.17.5.1</span>
<span class="t" style="left:1102.50px;top:474.27px;font-size:11.5px;line-height:11.5px;color:#000;letter-spacing:-0.268px;">Automatic</span>
<div style="left:1026px;top:521px;width:73px;height:21px;background:#e1e1e1;border:1px solid #adadad;box-sizing:border-box;"></div>
<div style="left:1107px;top:521px;width:73px;height:21px;background:#e1e1e1;border:1px solid #adadad;box-sizing:border-box;"></div>
<div style="left:1188px;top:521px;width:73px;height:21px;background:#e1e1e1;border:1px solid #adadad;box-sizing:border-box;"></div>
<span class="t" style="left:1046.00px;top:527.27px;font-size:11.5px;line-height:11.5px;color:#000;letter-spacing:0.087px;">Add...</span>
<span class="t" style="left:1127.00px;top:527.27px;font-size:11.5px;line-height:11.5px;color:#000;letter-spacing:0.099px;">Edit...</span>
<span class="t" style="left:1203.50px;top:527.27px;font-size:11.5px;line-height:11.5px;color:#000;letter-spacing:-0.566px;">Remove</span>
<div style="left:919px;top:572px;width:357px;height:43px;background:transparent;border:1px solid #dcdcdc;box-sizing:border-box;"></div>
<div style="left:925px;top:566px;width:102px;height:14px;background:#fff;"></div>
<div style="left:928px;top:567px;width:13px;height:13px;background:#fff;border:1px solid #333;box-sizing:border-box;"></div>
<span class="t" style="left:943.50px;top:569.27px;font-size:11.5px;line-height:11.5px;color:#000;letter-spacing:-0.376px;">Automatic metric</span>
<span class="t" style="left:930.50px;top:592.27px;font-size:11.5px;line-height:11.5px;color:#000;letter-spacing:-0.091px;">Interface metric:</span>
<div style="left:1028px;top:587px;width:75px;height:20px;background:#fff;border:1px solid #646464;box-sizing:border-box;"></div>
<span class="t" style="left:1034.50px;top:592.27px;font-size:11.5px;line-height:11.5px;color:#000;">1</span>
<div style="left:1135px;top:671px;width:73px;height:21px;background:#e1e1e1;border:1px solid #0078d7;box-sizing:border-box;border-width:2px;"></div>
<span class="t" style="left:1163.50px;top:677.27px;font-size:11.5px;line-height:11.5px;color:#000;letter-spacing:-1.500px;">OK</span>
<div style="left:1216px;top:671px;width:73px;height:21px;background:#e1e1e1;border:1px solid #adadad;box-sizing:border-box;"></div>
<span class="t" style="left:1235.50px;top:677.27px;font-size:11.5px;line-height:11.5px;color:#000;letter-spacing:-0.562px;">Cancel</span>
<svg class="a" style="left:1110px;top:570px" width="90" height="50" viewBox="0 0 90 50">
<defs><filter id="sh" x="-20%" y="-30%" width="140%" height="170%"><feDropShadow dx="1" dy="2" stdDeviation="1.5" flood-color="#000" flood-opacity="0.45"/></filter></defs>
<path d="M10.3 23.7 L38.6 8.4 L33 18 L74 17 A5 5 0 0 1 74 27 L33 28.3 L39.7 37.5 Z" fill="#fe5a4b" filter="url(#sh)"/>
</svg>
</body></html>
